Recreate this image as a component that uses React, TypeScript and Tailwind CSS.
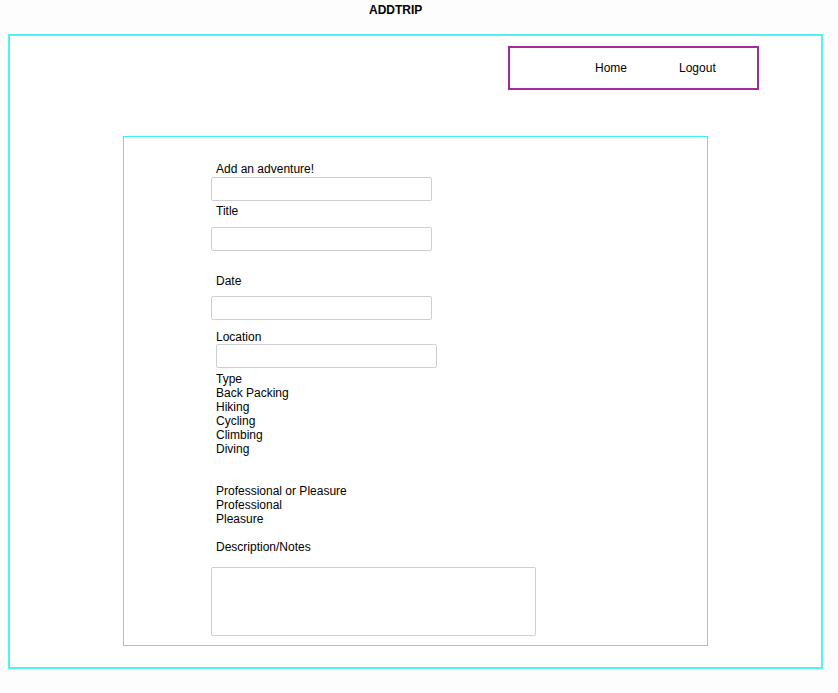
import React from 'react';

const labelCls = 'block ml-[92px] text-[12px] leading-[14px] text-black';
const inputCls = 'block h-[24px] w-[221px] border border-[#cfcfcf] rounded-[2px] bg-white';

export default function App() {
  return (
    <div className="min-h-[693px] bg-[#fdfdfd] pb-[23px] font-['Liberation_Sans',Arial,sans-serif]">
      <h1 className="pl-[369px] pt-[3px] text-[12px] leading-[14px] font-bold text-black">ADDTRIP</h1>

      <div className="ml-[8px] mt-[17px] h-[635px] w-[815px] border-2 border-[#52f2f2] bg-white">
        <nav className="ml-[498px] mt-[10px] flex h-[44px] w-[251px] items-center border-2 border-[#a4299a] text-[12px] leading-[14px] text-black">
          <a className="ml-[85px]">Home</a>
          <a className="ml-[52px]">Logout</a>
        </nav>

        <div className="ml-[113px] mt-[46px] h-[510px] w-[585px] border border-[#3ef0f0]">
          <form className="pt-[25px]">
            <label className={labelCls}>Add an adventure!</label>
            <input className={`${inputCls} ml-[87px] mt-[1px]`} />
            <label className={`${labelCls} mt-[3px]`}>Title</label>
            <input className={`${inputCls} ml-[87px] mt-[9px]`} />
            <label className={`${labelCls} mt-[23px]`}>Date</label>
            <input className={`${inputCls} ml-[87px] mt-[8px]`} />
            <label className={`${labelCls} mt-[10px]`}>Location</label>
            <input className={`${inputCls} ml-[92px]`} />
            <div className={`${labelCls} mt-[4px]`}>
              <div>Type</div>
              <div>Back Packing</div>
              <div>Hiking</div>
              <div>Cycling</div>
              <div>Climbing</div>
              <div>Diving</div>
            </div>
            <div className={`${labelCls} mt-[28px]`}>
              <div>Professional or Pleasure</div>
              <div>Professional</div>
              <div>Pleasure</div>
            </div>
            <label className={`${labelCls} mt-[14px]`}>Description/Notes</label>
            <textarea className="block ml-[87px] mt-[13px] h-[69px] w-[325px] resize-none border border-[#cfcfcf] rounded-[2px] bg-white" />
          </form>
        </div>
      </div>
    </div>
  );
}
